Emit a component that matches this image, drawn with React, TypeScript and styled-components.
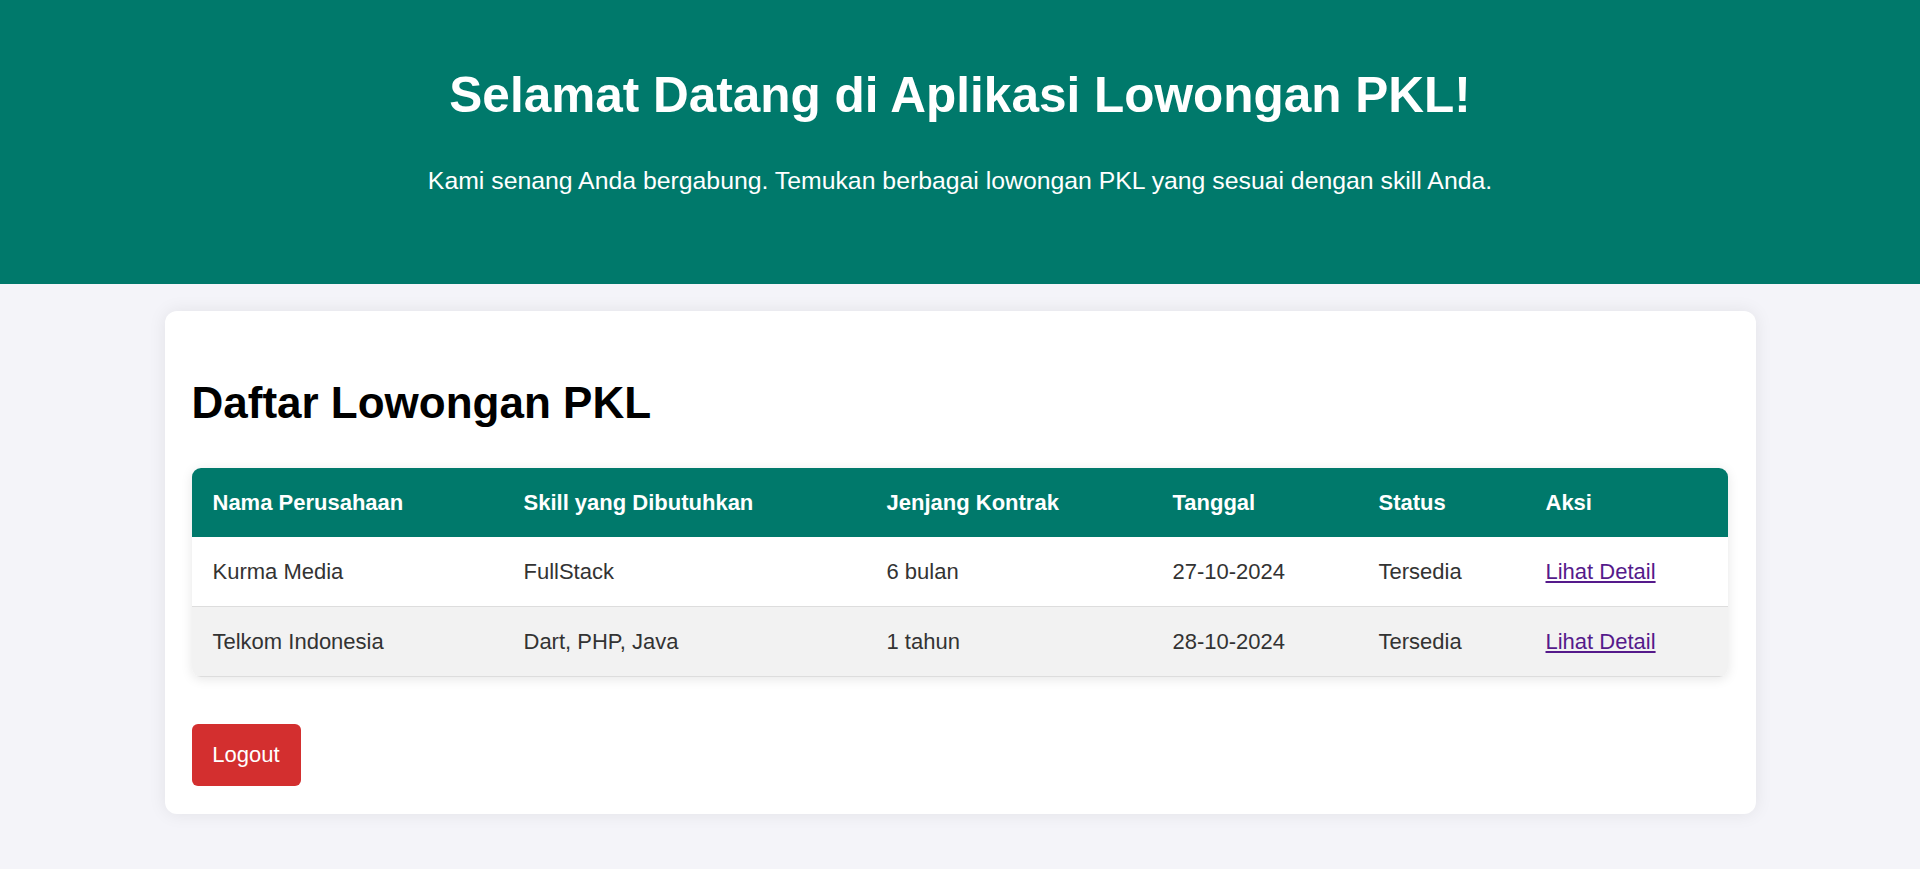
import React from "react";
import styled, { createGlobalStyle } from "styled-components";

const GlobalStyle = createGlobalStyle`
  html, body {
    margin: 0;
    padding: 0;
    background: #f4f4f9;
    font-family: "Liberation Sans", Arial, sans-serif;
  }
  * { box-sizing: border-box; }
`;

const Hero = styled.header`
  background: #00796b;
  color: #fff;
  height: 284px;
  padding-top: 66px;
  display: flex;
  flex-direction: column;
  align-items: center;
  gap: 44px;
  text-align: center;
`;

const HeroTitle = styled.h1`
  margin: 0;
  font-size: 49.5px;
  font-weight: 700;
  line-height: 57px;
`;

const HeroText = styled.p`
  margin: 0;
  font-size: 24.8px;
  line-height: 28px;
`;

const Card = styled.main`
  width: 1591px;
  margin: 27px auto;
  background: #fff;
  border-radius: 12px;
  padding: 27px 28px 28px 27px;
  box-shadow: 0 0 18px rgba(0, 0, 0, 0.08);
`;

const SectionTitle = styled.h2`
  margin: 40px 0 40px;
  font-size: 44px;
  line-height: 50px;
  font-weight: 700;
  color: #000;
`;

const Table = styled.table`
  width: 100%;
  border-collapse: collapse;
  table-layout: fixed;
  border-radius: 9px;
  overflow: hidden;
  box-shadow: 0 2px 12px rgba(0, 0, 0, 0.1);
`;

const HeadCell = styled.th<{ $w: number }>`
  width: ${(p) => p.$w}px;
  background: #00796b;
  color: #fff;
  text-align: left;
  font-size: 22px;
  font-weight: 700;
  line-height: 25px;
  padding: 22px 21px;
`;

const Row = styled.tr<{ $alt?: boolean }>`
  background: ${(p) => (p.$alt ? "#f2f2f2" : "#fff")};
  border-bottom: 1px solid #ddd;
`;

const Cell = styled.td`
  color: #333;
  font-size: 22px;
  line-height: 25px;
  padding: 22px 21px;
`;

const DetailLink = styled.a`
  color: #551a8b;
  text-decoration: underline;
`;

const LogoutButton = styled.button`
  margin-top: 47px;
  background: #d32f2f;
  color: #fff;
  border: none;
  border-radius: 6px;
  font-family: "Liberation Sans", Arial, sans-serif;
  font-size: 22px;
  line-height: 26px;
  padding: 18px 0;
  width: 109px;
  cursor: pointer;
  display: block;
`;

const columns = [
  { label: "Nama Perusahaan", w: 311 },
  { label: "Skill yang Dibutuhkan", w: 363 },
  { label: "Jenjang Kontrak", w: 286 },
  { label: "Tanggal", w: 206 },
  { label: "Status", w: 167 },
  { label: "Aksi", w: 203 },
];

const rows = [
  ["Kurma Media", "FullStack", "6 bulan", "27-10-2024", "Tersedia"],
  ["Telkom Indonesia", "Dart, PHP, Java", "1 tahun", "28-10-2024", "Tersedia"],
];

export default function App() {
  return (
    <>
      <GlobalStyle />
      <Hero>
        <HeroTitle>Selamat Datang di Aplikasi Lowongan PKL!</HeroTitle>
        <HeroText>
          Kami senang Anda bergabung. Temukan berbagai lowongan PKL yang sesuai dengan skill Anda.
        </HeroText>
      </Hero>
      <Card>
        <SectionTitle>Daftar Lowongan PKL</SectionTitle>
        <Table>
          <thead>
            <tr>
              {columns.map((c) => (
                <HeadCell key={c.label} $w={c.w}>
                  {c.label}
                </HeadCell>
              ))}
            </tr>
          </thead>
          <tbody>
            {rows.map((r, i) => (
              <Row key={r[0]} $alt={i % 2 === 1}>
                {r.map((v, j) => (
                  <Cell key={j}>{v}</Cell>
                ))}
                <Cell>
                  <DetailLink href="#">Lihat Detail</DetailLink>
                </Cell>
              </Row>
            ))}
          </tbody>
        </Table>
        <LogoutButton>Logout</LogoutButton>
      </Card>
    </>
  );
}
